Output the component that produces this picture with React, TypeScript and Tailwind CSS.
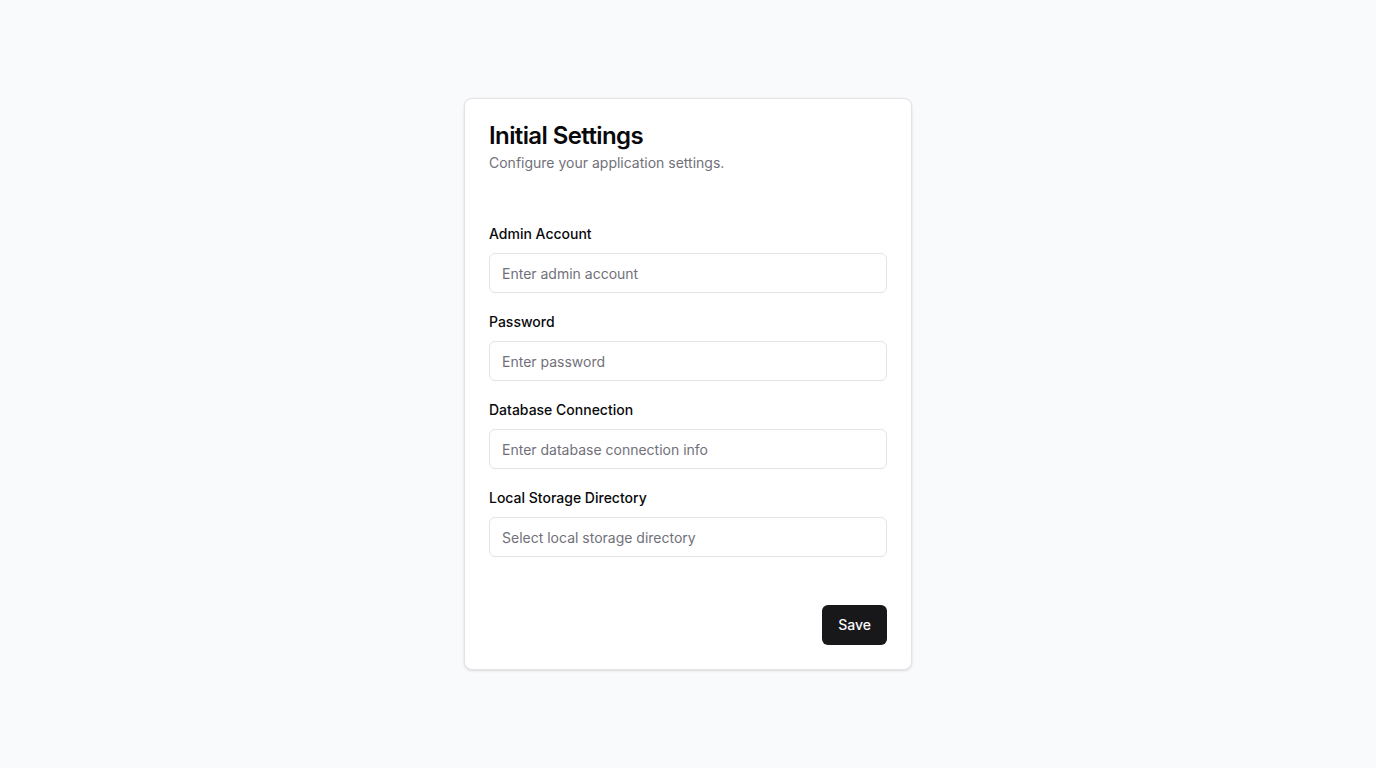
const fields = [
  { id: "admin", label: "Admin Account", placeholder: "Enter admin account", type: "text" },
  { id: "password", label: "Password", placeholder: "Enter password", type: "password" },
  { id: "db", label: "Database Connection", placeholder: "Enter database connection info", type: "text" },
  { id: "storage", label: "Local Storage Directory", placeholder: "Select local storage directory", type: "text" },
];

export default function App() {
  return (
    <div
      className="flex min-h-screen items-center justify-center bg-[#f9fafb]"
      style={{ fontFamily: "Inter, 'Noto Sans', sans-serif" }}
    >
      <div className="w-[448px] rounded-lg border border-[#e4e4e7] bg-white text-[#09090b] shadow-sm">
        <div className="flex flex-col gap-[5px] px-6 pt-[25px] pb-6">
          <h1 className="font-semibold text-2xl leading-none tracking-tight">Initial Settings</h1>
          <p className="text-[#71717a] text-sm">Configure your application settings.</p>
        </div>

        <form className="flex flex-col gap-4 px-6 pt-6 pb-6" onSubmit={(e) => e.preventDefault()}>
          {fields.map((f) => (
            <div className="flex flex-col gap-1.5" key={f.id}>
              <label className="font-medium text-sm leading-[26px]" htmlFor={f.id}>
                {f.label}
              </label>
              <input
                className="h-10 w-full rounded-md border border-[#e4e4e7] bg-white px-3 text-sm outline-none placeholder:text-[#71717a]"
                id={f.id}
                placeholder={f.placeholder}
                type={f.type}
              />
            </div>
          ))}
        </form>

        <div className="flex items-center justify-end p-6">
          <button
            className="h-10 rounded-md bg-[#18181b] px-4 font-medium text-sm text-[#fafafa]"
            type="button"
          >
            Save
          </button>
        </div>
      </div>
    </div>
  );
}
